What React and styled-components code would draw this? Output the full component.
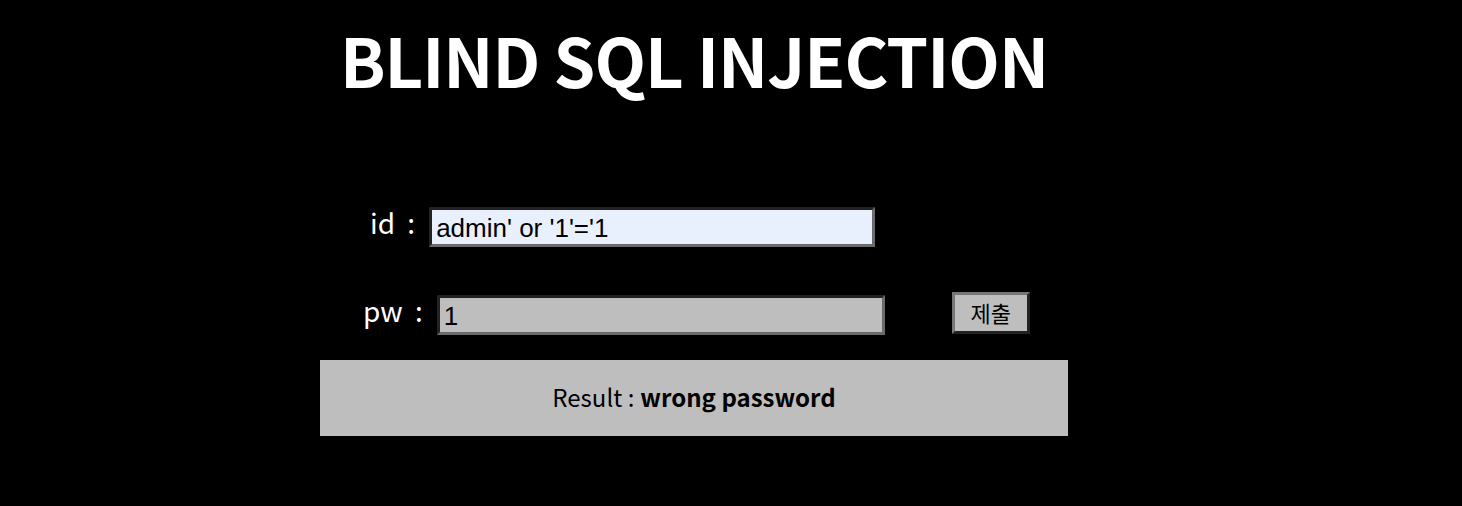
import styled, { createGlobalStyle } from 'styled-components';

const GlobalStyle = createGlobalStyle`
  body {
    margin: 0;
    background: #000;
    font-family: "Noto Sans CJK KR", "Noto Sans", sans-serif;
  }
`;

export default function App() {
  return (
    <>
      <GlobalStyle />
      <Page>
        <Title>BLIND SQL INJECTION</Title>

        <Form>
          <Row $indent={50} $top={105}>
            <Label>id :</Label>
            <Field $width={446} $bg="#e8f0fe" defaultValue="admin' or '1'='1" />
          </Row>

          <Row $indent={43} $top={48}>
            <Label>pw :</Label>
            <Field $width={448} $bg="#bebebe" type="text" defaultValue="1" />
            <Submit type="button">제출</Submit>
          </Row>
        </Form>

        <Result>
          Result : <strong>wrong password</strong>
        </Result>
      </Page>
    </>
  );
}

const Page = styled.div`
  width: 748px;
  margin-left: 320px;
  padding-top: 16px;
  display: flex;
  flex-direction: column;
`;

const Title = styled.h1`
  margin: 0;
  color: #fff;
  font-size: 67px;
  font-weight: 700;
  letter-spacing: -1px;
  line-height: 86px;
  text-align: center;
`;

const Form = styled.form`
  display: flex;
  flex-direction: column;
`;

const Row = styled.div`
  display: flex;
  align-items: center;
  gap: 14px;
  margin-top: ${({ $top }) => $top}px;
  padding-left: ${({ $indent }) => $indent}px;
  height: 40px;
`;

const Label = styled.label`
  color: #fff;
  font-size: 28px;
  line-height: 40px;
  word-spacing: 6px;
  position: relative;
  top: -5px;
`;

const Field = styled.input`
  box-sizing: border-box;
  width: ${({ $width }) => $width}px;
  height: 40px;
  padding: 2px 4px 0;
  background: ${({ $bg }) => $bg};
  border: 3px solid;
  border-color: #222 #6b6b6b #6b6b6b #222;
  font-family: "Liberation Sans", Arial, sans-serif;
  font-size: 26px;
  color: #000;
  outline: none;
`;

const Submit = styled.button`
  box-sizing: border-box;
  margin-left: 53px;
  width: 78px;
  height: 42px;
  position: relative;
  top: -2px;
  background: #bebebe;
  border: 3px solid;
  border-color: #777 #222 #222 #777;
  font-family: "Noto Sans CJK KR", sans-serif;
  font-size: 22px;
  color: #000;
  padding: 0 0 2px;
`;

const Result = styled.div`
  box-sizing: border-box;
  margin-top: 25px;
  height: 76px;
  padding-bottom: 4px;
  background: #bebebe;
  display: flex;
  align-items: center;
  justify-content: center;
  font-size: 24px;
  color: #000;

  strong {
    font-weight: 700;
    margin-left: 6px;
  }
`;
